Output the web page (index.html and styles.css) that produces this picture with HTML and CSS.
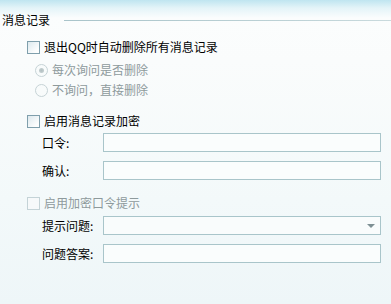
FILE: index.html
```html
<!DOCTYPE html>
<html>
<head>
  <meta charset="UTF-8">
  <meta name="viewport" content="width=device-width, initial-scale=1.0">
  <title>消息记录</title>
  <link rel="stylesheet" href="styles.css">
</head>
<body>
  <div class="panel">
    <div class="group-title">
      <span class="group-name">消息记录</span>
      <i class="rule"></i>
    </div>

    <label class="check-row first">
      <span class="checkbox"></span>
      <span>退出QQ时自动删除所有消息记录</span>
    </label>

    <div class="radio-row disabled first-radio">
      <span class="radio checked"></span>
      <span>每次询问是否删除</span>
    </div>
    <div class="radio-row disabled">
      <span class="radio"></span>
      <span>不询问，直接删除</span>
    </div>

    <label class="check-row encrypt">
      <span class="checkbox"></span>
      <span>启用消息记录加密</span>
    </label>

    <div class="field-row tight">
      <span class="field-label">口令:</span>
      <input class="field" type="password">
    </div>
    <div class="field-row">
      <span class="field-label">确认:</span>
      <input class="field" type="password">
    </div>

    <label class="check-row disabled hint">
      <span class="checkbox"></span>
      <span>启用加密口令提示</span>
    </label>

    <div class="field-row tight">
      <span class="field-label">提示问题:</span>
      <div class="field select">
        <span class="arrow"></span>
      </div>
    </div>
    <div class="field-row">
      <span class="field-label">问题答案:</span>
      <input class="field" type="text">
    </div>
  </div>
</body>
</html>
```

FILE: styles.css
```css
* {
  margin: 0;
  padding: 0;
  box-sizing: border-box;
}

body {
  width: 391px;
  height: 304px;
  overflow: hidden;
  font-family: 'Noto Sans CJK SC', 'DejaVu Sans', sans-serif;
  font-size: 12px;
  color: #000;
  background: linear-gradient(180deg, #bfe5f0 0px, #e4f4f8 8px, #fbfdfd 18px, #fafcfc 60px, #f3f9fa 200px, #eef6f8 304px);
}

.panel {
  display: flex;
  flex-direction: column;
}

.group-title {
  display: flex;
  align-items: center;
  height: 16px;
  margin-top: 12px;
  padding-left: 2px;
}

.group-name {
  line-height: 16px;
}

.rule {
  flex: 1;
  height: 1px;
  margin-left: 14px;
  background: linear-gradient(90deg, #a9c4ca, #bdd2d6 70%, #c9dadd);
}

.check-row,
.radio-row {
  display: flex;
  align-items: center;
  height: 20px;
  line-height: 20px;
  padding-left: 27px;
}

.check-row.first { margin-top: 9px; }
.check-row.encrypt { margin-top: 11px; }
.check-row.hint { margin-top: 13px; }

.radio-row {
  padding-left: 35px;
}

.radio-row.first-radio { margin-top: 3px; }

.disabled {
  color: #8e9a9c;
}

.checkbox {
  width: 13px;
  height: 13px;
  margin-right: 4px;
  border: 1px solid #7f9fac;
  background: linear-gradient(135deg, #dde9ee 0%, #fdfefe 80%);
}

.disabled .checkbox {
  border-color: #c4d3d7;
  background: #f6f9fa;
}

.radio {
  position: relative;
  width: 13px;
  height: 13px;
  margin-right: 4px;
  border: 1px solid #c6d3d6;
  border-radius: 50%;
  background: #f8fbfb;
}

.radio.checked::after {
  content: "";
  position: absolute;
  left: 3px;
  top: 3px;
  width: 5px;
  height: 5px;
  border-radius: 50%;
  background: radial-gradient(circle, #b3c0c2 0%, #c9d3d4 100%);
}

.field-row {
  display: flex;
  align-items: center;
  margin-top: 9px;
  padding-left: 42px;
  padding-right: 10px;
}

.field-row.tight { margin-top: 2px; }
.hint + .field-row.tight { margin-top: 3px; }

.field-label {
  width: 61px;
  line-height: 19px;
}

.field {
  position: relative;
  flex: 1;
  height: 19px;
  border: 1px solid #a9c5ca;
  background: #fafdfd;
  outline: none;
  font: inherit;
}

.select {
  background: #f9fcfc;
}

.arrow {
  position: absolute;
  right: 5px;
  top: 7px;
  width: 0;
  height: 0;
  border-left: 4px solid transparent;
  border-right: 4px solid transparent;
  border-top: 4px solid #7e9094;
}
```
